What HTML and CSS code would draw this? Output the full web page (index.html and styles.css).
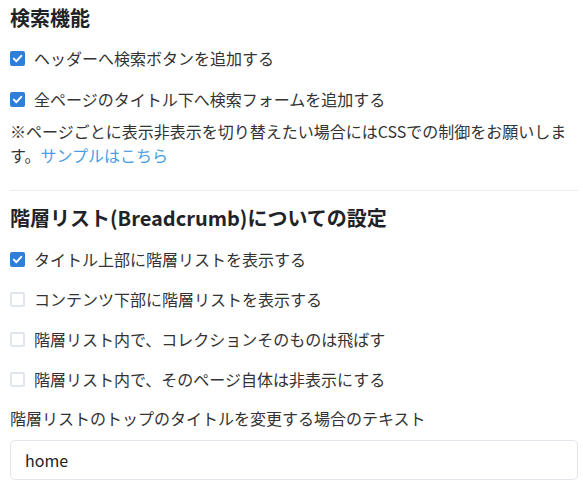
FILE: index.html
```html
<!DOCTYPE html>
<html lang="ja">
<head>
<meta charset="utf-8">
<link rel="stylesheet" href="styles.css">
</head>
<body>
<div class="panel">
  <h2 class="title">検索機能</h2>
  <div class="options first">
    <label class="row"><span class="box checked"><svg viewBox="0 0 15 15" width="15" height="15"><path d="M3.8 7.6 L6.4 10.2 L11.3 4.8" fill="none" stroke="#fff" stroke-width="2" stroke-linecap="round" stroke-linejoin="round"/></svg></span><span>ヘッダーへ検索ボタンを追加する</span></label>
    <label class="row"><span class="box checked"><svg viewBox="0 0 15 15" width="15" height="15"><path d="M3.8 7.6 L6.4 10.2 L11.3 4.8" fill="none" stroke="#fff" stroke-width="2" stroke-linecap="round" stroke-linejoin="round"/></svg></span><span>全ページのタイトル下へ検索フォームを追加する</span></label>
  </div>
  <p class="note">※ページごとに表示非表示を切り替えたい場合にはCSSでの制御をお願いします。<a class="link" href="#">サンプルはこちら</a></p>
  <hr class="divider">
  <h2 class="title second">階層リスト(Breadcrumb)についての設定</h2>
  <div class="options">
    <label class="row"><span class="box checked"><svg viewBox="0 0 15 15" width="15" height="15"><path d="M3.8 7.6 L6.4 10.2 L11.3 4.8" fill="none" stroke="#fff" stroke-width="2" stroke-linecap="round" stroke-linejoin="round"/></svg></span><span>タイトル上部に階層リストを表示する</span></label>
    <label class="row"><span class="box"></span><span>コンテンツ下部に階層リストを表示する</span></label>
    <label class="row"><span class="box"></span><span>階層リスト内で、コレクションそのものは飛ばす</span></label>
    <label class="row"><span class="box"></span><span>階層リスト内で、そのページ自体は非表示にする</span></label>
  </div>
  <div class="field-label">階層リストのトップのタイトルを変更する場合のテキスト</div>
  <div class="input">home</div>
</div>
</body>
</html>
```
FILE: styles.css
```css
html, body {
  margin: 0;
  padding: 0;
  background: #fff;
}
body {
  font-family: "Noto Sans CJK JP", "Noto Sans", sans-serif;
  color: #333;
}
.panel {
  padding: 0 5px 0 10px;
}
.title {
  margin: 0;
  font-size: 20px;
  line-height: 36px;
  font-weight: 700;
  color: #1f2328;
}
.second {
  margin-top: 9px;
}
.options {
  display: flex;
  flex-direction: column;
  margin-top: 3px;
}
.options.first {
  margin-top: 2px;
  gap: 1px;
}
.row {
  display: flex;
  align-items: center;
  gap: 9px;
  height: 40px;
  font-size: 16px;
  color: #333;
}
.box {
  width: 15px;
  height: 15px;
  box-sizing: border-box;
  border: 2px solid #e1e6ee;
  border-radius: 2px;
  flex: none;
  display: flex;
}
.box.checked {
  background: #2f7fd8;
  border: none;
}
.note {
  margin: 0;
  font-size: 16px;
  line-height: 24px;
  color: #333;
}
.link {
  color: #4a9de3;
  text-decoration: none;
}
.divider {
  margin: 23px 0 0;
  border: 0;
  border-top: 1px solid #ebedf0;
}
.field-label {
  margin-top: 7px;
  font-size: 16px;
  line-height: 24px;
  color: #333;
}
.input {
  margin-top: 10px;
  height: 40px;
  box-sizing: border-box;
  border: 1px solid #e2e6ec;
  border-radius: 5px;
  padding: 0 14px;
  display: flex;
  align-items: center;
  font-size: 16px;
  color: #222;
}
```
